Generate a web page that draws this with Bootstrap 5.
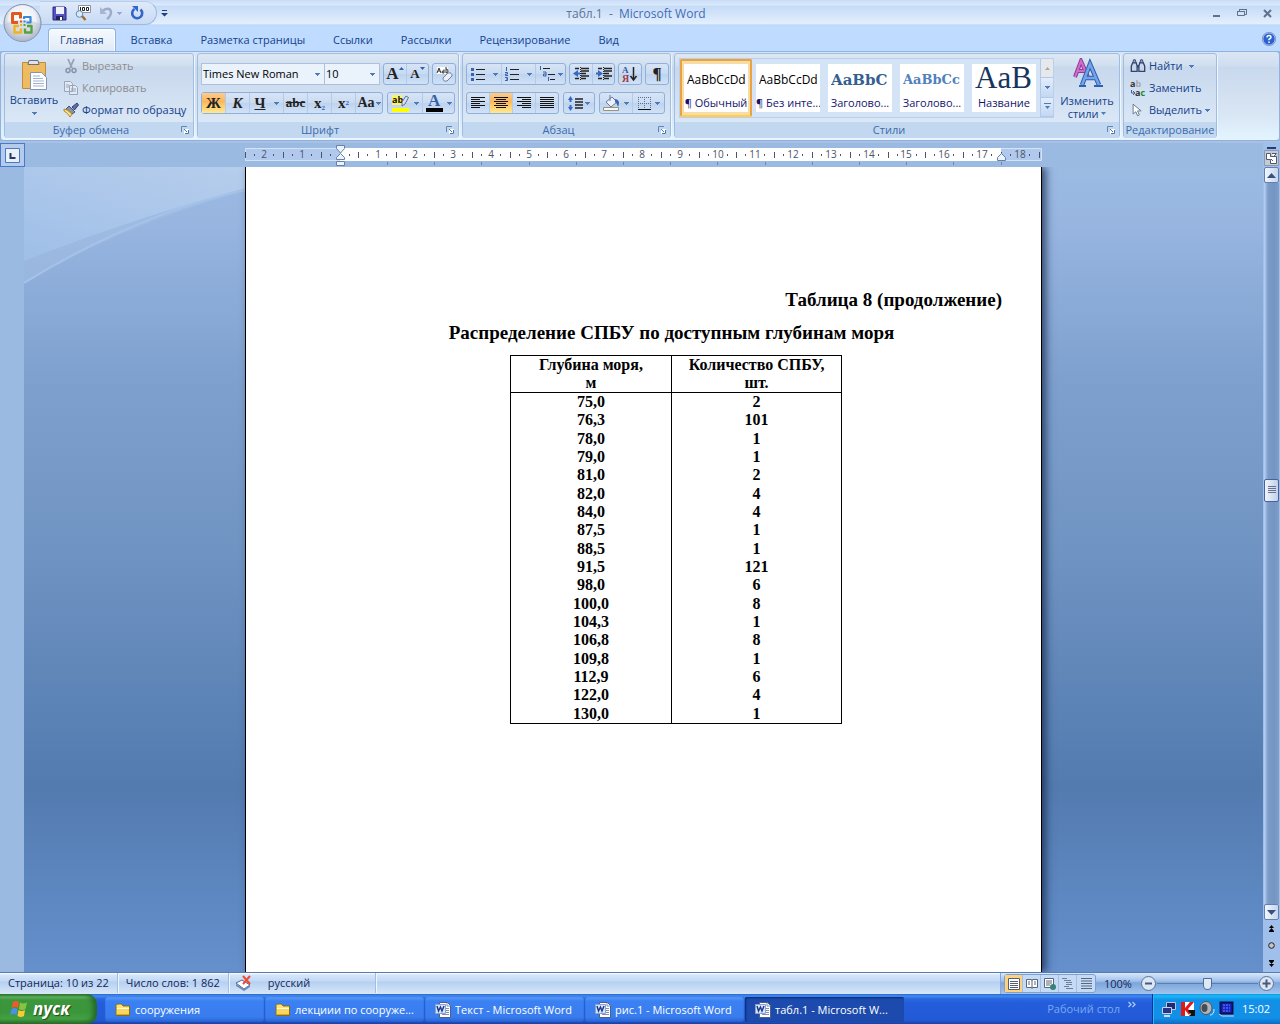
<!DOCTYPE html>
<html lang="ru">
<head>
<meta charset="utf-8">
<meta name="viewport" content="width=device-width, initial-scale=1">
<title>табл.1 - Microsoft Word</title>
<link href="https://cdn.jsdelivr.net/npm/bootstrap@5.3.0/dist/css/bootstrap.min.css" rel="stylesheet">
<style>
body{font-family:"Open Sans","Noto Sans",sans-serif;font-size:11px;line-height:16px;color:#15428b;background:#9bbae1}
svg{display:block;flex:none}
button{font:inherit;color:inherit;background:none;border:0;padding:0}
.app{min-height:100vh}
.side{flex:1 1 0}
/* title bar */
.titlebar{height:26px;background:linear-gradient(#c9dcf6 0,#dceafc 5px,#c6dbf7 6px,#e3effd 24px,#b2cff5 25px,#cde1fc 26px)}
.office{left:2px;top:2px;width:41px;height:41px;z-index:3}
.quick{height:24px;margin-left:40px;padding:0 12px 0 12px;border:1px solid #9db9e2;border-left:0;border-top-color:#b8cdec;border-radius:0 12px 12px 0;background:linear-gradient(#dfeafa,#c8daf4)}
.wintitle{font-size:12px;color:#5c7396;padding-top:2px}
.wintitle b{font-weight:400;color:#3f6db4}
/* tabs */
.tabs{height:25px;background:#bfdbff;padding-left:48px}
.tabs .nav-link{height:25px;padding:5px 13px 0;color:#15428b;font-size:11px;line-height:16px;border:1px solid transparent;border-bottom:0}
.tabs .nav-link.active{padding:3px 11px 0;margin:2px 1px 0 0;height:24px;border-color:#8db2e3;border-radius:4px 4px 0 0;background:linear-gradient(#f6fafe,#dfe9f5);box-shadow:inset 0 0 0 1px #fff}
/* ribbon */
.ribbon{height:90px;padding:1px 3px 2px;gap:3px;border:1px solid #8db2e3;border-bottom-color:#8fb1de;border-radius:4px;background:linear-gradient(#dbe6f4 0,#cfddef 14px,#c9d9ed 15px,#d8e5f4 60px,#e3f4ff 88px)}
.ribbon-shade{height:2px;background:#a7c0e4}
.rgroup{flex:none;border:1px solid #9ebde0;border-radius:3px;box-shadow:1px 1px 0 #eff6fd;background:linear-gradient(#dde8f5 0,#d0deef 12px,#c8d8ed 13px,#d9e7f6 68px)}
.rgroup>.body{height:68px}
.rgroup>.caption{height:16px;line-height:16px;background:#c1d8f0;color:#3e6aaa;position:relative;text-align:center}
.caption svg{position:absolute;right:4px;top:4px}
.g-clip{width:190px}.g-font{width:262px}.g-para{width:209px}.g-style{width:446px}.g-edit{width:94px}
.g-font .body,.g-para .body{padding:9px 3px 0;gap:7px}
.g-edit .body{padding-left:6px}
.tool-row{height:22px;gap:4px}
.tool-row.tight{gap:3px}
.bgroup{height:22px;border:1px solid #90b0dc;border-radius:3px;background:linear-gradient(#d7e4f5,#c9dbf2 49%,#bdd2ee 50%,#d0e2f7)}
.bgroup button{display:flex;align-items:center;justify-content:center;gap:4px;height:20px;width:23px;color:#222;font-family:"Liberation Serif",serif;font-size:15px;font-weight:700}
.bgroup button+button{border-left:1px solid #b3cae9}
.bgroup .w-22{width:22px}.bgroup .w-24{width:24px}.bgroup .w-34{width:34px}.bgroup .w-32{width:32px}
.bgroup .w-30{width:30px;gap:2px}.bgroup .w-27{width:27px;gap:1px;font-size:14px}
.bgroup .fs-lg{font-size:17px;gap:0}.bgroup .fs-sm{font-size:13px;gap:0}
.bgroup sub,.bgroup sup{font-size:7px;color:#2d5fb5}
.bgroup .on{background:linear-gradient(#fccb8d,#fbb45b 45%,#fdc566 55%,#fee993)}
.combo{height:22px;border:1px solid #abc1de;background:#eaf2fb;color:#000;appearance:none;padding:0 1px;font:inherit;line-height:20px;border-radius:0;
 background-image:linear-gradient(#4f7ab8,#4f7ab8),linear-gradient(#4f7ab8,#4f7ab8),linear-gradient(#4f7ab8,#4f7ab8);background-repeat:no-repeat;background-size:5px 1px,3px 1px,1px 1px;background-position:right 4px top 9px,right 5px top 10px,right 6px top 11px}
.combo.face{width:124px}.combo.size{width:55px;border-left:0}
.big{width:58px;flex:none;padding-top:4px}
.big.two{line-height:13px}
.stack{padding-top:1px}
.small-btn{display:flex;flex:none;align-items:center;height:22px;gap:3px;color:#15428b;white-space:nowrap}
.small-btn:disabled{color:#8d8d8d}
/* style gallery */
.gallery{margin:4px 0 0 4px;height:60px;border:1px solid #b9d0ed;background:#d4e4f6}
.gstyle{width:72px;height:58px;padding:5px 4px}
.gstyle .sheet{display:block;width:64px;height:48px;background:#fff;overflow:hidden;text-align:center;color:#15156e;white-space:nowrap}
.gstyle .sample{display:flex;align-items:center;height:31px;margin-left:3px;width:58px;overflow:hidden;color:#000;font-size:12px}
.gstyle .sheet>.name{display:block;font-size:11px;line-height:16px}
.gstyle.sel{height:58px;border:2px solid #eba23f;border-bottom-color:#ffcf4b;padding:3px 2px;background:#f8dca5;border-radius:2px}
.gstyle .h1s{font-family:"DejaVu Serif","Liberation Serif",serif;font-weight:700;color:#365f91;font-size:15px}
.gstyle .h2s{font-family:"DejaVu Serif","Liberation Serif",serif;font-weight:700;color:#4f81bd;font-size:13px}
.gstyle .ts{font-family:"Liberation Serif",serif;color:#17365d;font-size:31px;align-items:flex-start;line-height:28px}
.gscroll{width:13px;border-left:1px solid #b0c9ea}
.gscroll button{display:flex;align-items:center;justify-content:center;flex:1;border-bottom:1px solid #b0c9ea;background:linear-gradient(#e3edfb,#c3d8f3)}
.gscroll button:first-child{background:#e6e8eb}
/* rulers and document */
.rulerbar{height:24px;background:#9bbae1}
.tabsel{width:25px;height:24px;border:1px solid #4a79cb;background:#b4cbec;display:flex;align-items:center;justify-content:center}
.vstrip{width:24px;background:#9bbae1}
.desk{background:linear-gradient(#9cbbe3 0,#96b4df 65px,#7ea0ce 215px,#6f93c2 390px,#567eb2 590px,#537bb0 620px,#6590cc 805px);overflow:hidden}
.swoosh{left:0;top:0}
.paper{width:797px;border:solid #000;border-width:0 1px;background:#fff;box-shadow:4px 0 8px rgba(20,40,75,.75);color:#000;font-family:"Liberation Serif",serif;font-weight:700;padding:123px 39px 0 38px}
.cap-r{font-size:19px;line-height:20px;margin:0;text-align:right}
.cap-c{font-size:19px;line-height:22px;margin:12px 0 11px;text-align:center;padding-left:57px}
.depths{width:332px;margin-left:226px;border-collapse:collapse;font-size:16px;border:1px solid #000;text-align:center}
.depths th,.depths td{padding:0;border:0 solid #000;border-right-width:1px;line-height:18px}
.depths th{border-bottom-width:1px;vertical-align:top}
.depths .c1{width:161px}
.depths tbody tr:nth-child(3n) td{line-height:19px}
.vscroll{width:17px;background:#a0bfeb}
.sbtn{width:15px;height:16px;margin-left:1px;border:1px solid #6380b5;border-radius:2px;background:linear-gradient(90deg,#f2f7fd,#c5d5eb);display:flex;align-items:center;justify-content:center}
.strack{flex:1 1 0;width:15px;background:linear-gradient(90deg,#bad3f5 0,#7c9cc9 4px,#7495c2 10px,#7f9ec8)}
.sthumb{height:23px;border:1px solid #47639d;border-radius:2px;background:linear-gradient(90deg,#f0f4fa,#c1d1e9)}
.browse{height:52px}
/* status bar */
.status{height:22px;border-top:1px solid #567db1;background:linear-gradient(#fff 0,#d5e5f9 2px,#c2d9f5 8px,#b5d0f1 9px,#d8e7f8 21px);color:#15275a}
.status .cell{height:20px;line-height:20px;border-right:1px solid #a0bde2;padding:0 8px;box-shadow:1px 0 0 #f0f6fd}
.status .proof{width:147px;padding-left:6px}
.status .right{height:21px;width:280px;padding-left:3px;background:linear-gradient(#dae8fa 0,#9fc1ec 8px,#7da5d9 10px,#a3c5ee 21px);border-left:1px solid #86a7d7}
.views{height:19px;border:1px solid #7e9fd0;border-radius:3px;background:#c5daf5}
.views button{width:18px;height:17px;display:flex;align-items:center;justify-content:center;border-right:1px solid #a5bfe3}
.views .on{background:#fcd27f}
.zoom{width:101px;height:16px;appearance:none;background:linear-gradient(#5d7fae,#5d7fae) center/100% 1px no-repeat;margin:0}
.zoom::-webkit-slider-thumb{appearance:none;width:9px;height:12px;border:1px solid #506c97;border-radius:1px 1px 5px 5px;background:#dfe9f6}
/* taskbar */
.taskbar{height:30px;background:linear-gradient(#2b66d0 0,#3f8cf0 2px,#2c66e0 5px,#245ddb 9px,#225ad6 26px,#1941a5 30px);color:#fff}
.start{width:97px;height:30px;padding-left:10px;background:linear-gradient(#2f7c2d 0,#63b563 3px,#3c963c 6px,#3a963a 18px,#43a143 25px,#2a6e29 30px);border-radius:0 10px 10px 0;box-shadow:inset -4px 0 5px #24672b;font-size:17px;font-weight:700;font-style:italic;gap:4px;text-shadow:1px 1px 1px #234a1b;color:#fff}
.tasks{gap:1px}
.task{width:159px;height:25px;margin-top:1px;padding:0 8px 0 10px;gap:4px;border-radius:2px;background:linear-gradient(#5d9bfa,#3c81f3 4px,#387cee 20px,#2a62d3);box-shadow:inset 0 0 1px #173c9b;color:#fff;text-align:left}
.task.cur{background:#1c4bad;box-shadow:inset 1px 1px 2px #0a2a74}
.tray{width:128px;height:30px;padding-left:8px;border-left:1px solid #0a2f93;background:linear-gradient(#1494e0 0,#18b9f5 2px,#1290e8 6px,#1290e8 24px,#0b6ac4 30px);box-shadow:inset 1px 0 0 #18bbff;gap:3px}
.deskbar{color:#7aa8f2}
</style>
<script src="https://cdn.jsdelivr.net/npm/bootstrap@5.3.0/dist/js/bootstrap.bundle.min.js"></script>
</head>
<body>
<svg width="0" height="0" class="position-absolute" aria-hidden="true">
<defs>
<symbol id="dn" viewBox="0 0 5 3"><path d="M0 0h5v1h-1v1h-1v1h-1v-1h-1v-1h-1z" fill="#4f7ab8"/></symbol>
<symbol id="launch" viewBox="0 0 8 8"><path d="M.5 6V.5H6" fill="none" stroke="#6286b8"/><path d="M3 3h5v5H3z" fill="#fff"/><path d="M3 3l3 3M7.500 4v3.500H4" stroke="#4f75ac" fill="none"/></symbol>
<symbol id="folder" viewBox="0 0 16 16"><path d="M1 13.500V3.500l1.500-1.500h4L8 4h6.500v9.500z" fill="#ffe27a" stroke="#8c6a12"/><path d="M2 6.500h12" stroke="#fffbe0"/><path d="M2 7h12v6H2z" fill="#fbd65c"/><path d="M2 12.500h12" stroke="#d9a92e"/></symbol>
<symbol id="word" viewBox="0 0 16 16"><path d="M4.500.500h8l3 3v12h-11z" fill="#fff" stroke="#4d5f8b"/><path d="M12 1v3h3M7 12.500h7M11 6.500h3M11 8.500h3M11 10.500h3" stroke="#7c8fb8" fill="none"/><path d="M.5 2.500h10v9h-10z" fill="#dce6fa" stroke="#8ea2d0"/><path d="M2 4l1.500 5L5.500 5l1.500 4L9 4" fill="none" stroke="#1c3d91" stroke-width="1.500"/></symbol>
</defs></svg>

<div class="app d-flex flex-column position-relative">
<button class="office position-absolute" aria-label="Office"><svg width="41" height="41" viewBox="0 0 41 41">
<defs><radialGradient id="orb" cx=".5" cy=".4" r=".6"><stop offset="0" stop-color="#fff"/><stop offset=".6" stop-color="#eef1f6"/><stop offset="1" stop-color="#a3aec3"/></radialGradient></defs>
<circle cx="20.500" cy="21" r="18.500" fill="url(#orb)" stroke="#7f8fae"/><path d="M3 22q17-8 35 0a17 17 0 0 1-35 0z" fill="#b5bfd0" opacity=".45"/>
<g fill="none" stroke-linejoin="round"><path d="M16 20.500h-5.500v-9h8v5" stroke="#e2571c" stroke-width="3"/><path d="M22 17v-2h6.500v5.500h-4" stroke="#3a86d8" stroke-width="2.200"/><path d="M17 24h-4.500v6.500h6.500v-4" stroke="#f0b31c" stroke-width="2.400"/><path d="M25 24h4.500v6.500h-6.500v-4" stroke="#56a33c" stroke-width="2.400"/></g>
<path d="M18 18.500h2v2h-2z" fill="#e2571c"/><path d="M21.500 18.500h2v2h-2z" fill="#3a86d8"/><path d="M18 22h2v2h-2z" fill="#f0b31c"/><path d="M21.500 22h2v2h-2z" fill="#56a33c"/></svg></button>

<header class="titlebar d-flex align-items-center">
<div class="side d-flex align-items-center">
<div class="quick d-flex align-items-center gap-2">
<button aria-label="Сохранить"><svg width="15" height="15" viewBox="0 0 15 15"><path d="M1 1h12l1 1v12H1z" fill="#5652c5" stroke="#29277c"/><path d="M4 1h8v7H4z" fill="#eef1fb"/><path d="M4 10h7v4H4z" fill="#23235d"/><path d="M8 11h2v3H8z" fill="#fff"/></svg></button>
<button aria-label="Масштаб 100"><svg width="16" height="16" viewBox="0 0 16 16"><path d="M3.500.500h12v7h-12z" fill="#fff" stroke="#8a94a8"/><path d="M5.500 2v4M7.500 2.500h2v3h-2zM11.500 2.500h2v3h-2z" stroke="#222" fill="none"/><circle cx="4.500" cy="9" r="3.300" fill="#d3ecfb" stroke="#6b88ad"/><path d="M7 11l3.500 4" stroke="#a0703c" stroke-width="2.500"/></svg></button>
<button aria-label="Отменить" class="d-flex align-items-center gap-1"><svg width="14" height="14" viewBox="0 0 14 14"><path d="M3 5q8-5 9 1q0 4-4 7" fill="none" stroke="#9eabc9" stroke-width="2.500"/><path d="M1 1v7h7z" fill="#a9b5d1"/></svg><svg width="5" height="3" opacity=".5"><use href="#dn"/></svg></button>
<button aria-label="Повторить"><svg width="14" height="14" viewBox="0 0 14 14"><path d="M4.500 3a5 5 0 1 0 6 .5" fill="none" stroke="#3465c8" stroke-width="2.600"/><path d="M2 0h6v6z" fill="#3465c8"/></svg></button>
</div>
<button aria-label="Настройка панели" class="ms-1"><svg width="7" height="7" viewBox="0 0 7 7"><path d="M1 0h5v1H1zM0 3h7L3.500 6.500z" fill="#233e7a"/></svg></button>
</div>
<div class="wintitle">табл.1&nbsp; -&nbsp; <b>Microsoft Word</b></div>
<div class="side d-flex justify-content-end align-items-center gap-3 pe-2">
<button aria-label="Свернуть"><svg width="8" height="10"><path d="M0 7h7v2H0z" fill="#60718d"/></svg></button>
<button aria-label="Восстановить"><svg width="10" height="10" viewBox="0 0 10 10"><path d="M2.500 3V1.500h7v5H8M.5 3.500h7v4h-7z" fill="none" stroke="#60718d"/><path d="M2 1.500h8M0 3.500h8" stroke="#60718d"/></svg></button>
<button aria-label="Закрыть"><svg width="9" height="9" viewBox="0 0 9 9"><path d="M1 1l7 7M8 1L1 8" stroke="#60718d" stroke-width="2"/></svg></button>
</div>
</header>

<nav class="tabs d-flex justify-content-between align-items-center pe-1">
<ul class="nav flex-nowrap align-self-start">
<li class="nav-item"><a class="nav-link active" href="#">Главная</a></li>
<li class="nav-item"><a class="nav-link" href="#">Вставка</a></li>
<li class="nav-item"><a class="nav-link" href="#">Разметка страницы</a></li>
<li class="nav-item"><a class="nav-link" href="#">Ссылки</a></li>
<li class="nav-item"><a class="nav-link" href="#">Рассылки</a></li>
<li class="nav-item"><a class="nav-link" href="#">Рецензирование</a></li>
<li class="nav-item"><a class="nav-link" href="#">Вид</a></li>
</ul>
<button aria-label="Справка"><svg width="14" height="14" viewBox="0 0 14 14"><circle cx="7" cy="7" r="6.300" fill="#2b62d2" stroke="#e9f2ff"/><circle cx="7" cy="7" r="6.700" fill="none" stroke="#4667a8" stroke-width=".6"/><path d="M5 5.500q0-2 2-2t2 1.800q0 1-2 2v1M7 9.500v1.500" stroke="#fff" stroke-width="1.500" fill="none"/></svg></button>
</nav>

<div class="ribbon d-flex">
<section class="rgroup g-clip"><div class="body d-flex">
<button class="big d-flex flex-column align-items-center"><svg width="32" height="34" viewBox="0 0 32 34"><path d="M4.500 4.500h23v26h-23z" fill="#eebb61" stroke="#c08d3c"/><path d="M11 2.500h9l1 4H10z" fill="#dfe2e8" stroke="#687080"/><path d="M12.500 14.500h11l5 5v12h-16z" fill="#fff" stroke="#7f94b8" /><path d="M15 18h7M15 20.500h10M15 23h11M15 25.500h11M15 28h11" stroke="#9fb1cd"/></svg><span>Вставить</span><svg class="mt-1" width="5" height="3"><use href="#dn"/></svg></button>
<div class="stack d-flex flex-column">
<button class="small-btn" disabled><svg width="16" height="16" viewBox="0 0 16 16"><path d="M5 1l4 9M11 1L7 10" stroke="#98a2b3" stroke-width="1.800"/><circle cx="5" cy="12.500" r="2" fill="none" stroke="#8793a8" stroke-width="1.500"/><circle cx="11" cy="12.500" r="2" fill="none" stroke="#8793a8" stroke-width="1.500"/></svg>Вырезать</button>
<button class="small-btn" disabled><svg width="16" height="16" viewBox="0 0 16 16"><path d="M1.500 1.500h6l2 2v8h-8zM6.500 5.500h6l2 2v7h-8z" fill="#e3e9f2" stroke="#98a5bd"/><path d="M3 5h3M3 7h3M8 9h5M8 11h5" stroke="#98a5bd"/></svg>Копировать</button>
<button class="small-btn"><svg width="16" height="16" viewBox="0 0 16 16"><path d="M9 5l5-4 1.500 2-4 5z" fill="#5f6fa5" stroke="#33407a"/><path d="M6 4l6 6-3 2-6-5z" fill="#8791ab" stroke="#4d5468"/><path d="M1 7q3 0 8 5l-2 3q-2-4-6-6z" fill="#ffe17a" stroke="#b08a2c"/></svg>Формат по образцу</button>
</div></div><div class="caption pe-3">Буфер обмена<svg width="8" height="8"><use href="#launch"/></svg></div></section>

<section class="rgroup g-font"><div class="body d-flex flex-column">
<div class="tool-row tight d-flex">
<div class="d-flex"><select class="combo face" aria-label="Шрифт"><option>Times New Roman</option></select><select class="combo size" aria-label="Размер"><option>10</option></select></div>
<div class="bgroup d-flex"><button class="w-22 fs-lg" aria-label="Увеличить размер">A<svg width="5" height="14" viewBox="0 0 5 14"><path d="M0 3L2.500 0 5 3z" fill="#335fae"/></svg></button><button class="w-22 fs-sm" aria-label="Уменьшить размер">A<svg width="5" height="14" viewBox="0 0 5 14"><path d="M0 0L2.500 3 5 0z" fill="#335fae"/></svg></button></div>
<div class="bgroup d-flex"><button class="w-22" aria-label="Очистить формат"><svg width="17" height="17" viewBox="0 0 17 17"><path d="M1 1h11v7H1z" fill="#fff"/><path d="M1 7l2-5 2 5M2 5h2M8 3.500v3.500q-2 .5-2-1t2-1M10 1v6q2 0 2-2t-2-2" stroke="#333" fill="none"/><path d="M7 12l5-5q4-1 4 3l-5 5q-4 1-4-3z" fill="#edf1f7" stroke="#6e7f9f"/></svg></button></div>
</div>
<div class="tool-row d-flex">
<div class="bgroup d-flex"><button class="on">Ж</button><button class="w-24"><i>К</i></button><button class="w-34"><u>Ч</u><svg class="ms-1" width="5" height="3"><use href="#dn"/></svg></button><button class="w-24 fs-sm"><s>abc</s></button><button class="w-24"><span>x<sub>2</sub></span></button><button class="w-24"><span>x<sup>2</sup></span></button><button class="w-27">Aa<svg width="5" height="3"><use href="#dn"/></svg></button></div>
<div class="bgroup d-flex"><button class="w-34" aria-label="Цвет выделения"><svg width="18" height="18" viewBox="0 0 18 18"><path d="M0 1h10v10H0z" fill="#fbf45e"/><text x="0" y="9" font-family="Open Sans, sans-serif" font-size="9" fill="#111">ab</text><path d="M10 8l4-6 2.500 1.500L13 10l-3 2z" fill="#dbe3f0" stroke="#5e6f92"/><path d="M0 14h17v4H0z" fill="#ff0"/></svg><svg width="5" height="3"><use href="#dn"/></svg></button><button class="w-32" aria-label="Цвет текста"><svg width="17" height="18" viewBox="0 0 17 18"><text x="2" y="12" font-family="Liberation Serif, serif" font-size="17" font-weight="700" fill="#365fa6">A</text><path d="M0 14h17v4H0z" fill="#000"/></svg><svg width="5" height="3"><use href="#dn"/></svg></button></div>
</div></div><div class="caption pe-3">Шрифт<svg width="8" height="8"><use href="#launch"/></svg></div></section>

<section class="rgroup g-para"><div class="body d-flex flex-column">
<div class="tool-row tight d-flex">
<div class="bgroup d-flex"><button class="w-34" aria-label="Маркеры"><svg width="14" height="14" viewBox="0 0 14 14"><path d="M5 2.500h9M5 7.500h9M5 12.500h9" stroke="#222"/><path d="M0 1h3v3H0zM0 6h3v3H0zM0 11h3v3H0z" fill="#3b61ac"/></svg><svg class="ms-1" width="5" height="3"><use href="#dn"/></svg></button><button class="w-34" aria-label="Нумерация"><svg width="14" height="14" viewBox="0 0 14 14"><path d="M5 2.500h9M5 7.500h9M5 12.500h9" stroke="#222"/><path d="M1.500 0v4M0 5.500h2.500v1.500H.5v1.500H3M0 10.500h2.500v3H0M1 12h2" fill="none" stroke="#3b61ac"/></svg><svg class="ms-1" width="5" height="3"><use href="#dn"/></svg></button><button class="w-30" aria-label="Многоуровневый список"><svg width="17" height="16" viewBox="0 0 17 16"><path d="M4 2.500h7M9 8.500h7M11 13.500h5" stroke="#222"/><path d="M1.500 0v4M4 6h3v4H4.500V8H7M9.500 11v4" fill="none" stroke="#3b61ac"/></svg><svg width="5" height="3"><use href="#dn"/></svg></button></div>
<div class="bgroup d-flex"><button class="w-22" aria-label="Уменьшить отступ"><svg width="16" height="14" viewBox="0 0 16 14"><path d="M2 1.500h4M2 11.500h4M8 1.500h8M8 4h8M8 6.500h5M8 9h8M8 11.500h5" stroke="#222" stroke-width="1.300"/><path d="M7.500 0v14" stroke="#222" stroke-dasharray="1 1"/><path d="M5 3v7L0 6.500zM5 5.500h2v2H5z" fill="#3768c3"/></svg></button><button class="w-22" aria-label="Увеличить отступ"><svg width="16" height="14" viewBox="0 0 16 14"><path d="M2 1.500h4M2 11.500h4M8 1.500h8M8 4h8M8 6.500h5M8 9h8M8 11.500h5" stroke="#222" stroke-width="1.300"/><path d="M7.500 0v14" stroke="#222" stroke-dasharray="1 1"/><path d="M2 3v7l5-3.500zM0 5.500h2v2H0z" fill="#3768c3"/></svg></button></div>
<div class="bgroup d-flex"><button class="w-22" aria-label="Сортировка"><svg width="16" height="17" viewBox="0 0 16 17"><text x="0" y="7" font-family="Liberation Serif, serif" font-size="9" font-weight="700" fill="#31599f">А</text><text x="0" y="16" font-family="Liberation Serif, serif" font-size="10" font-weight="700" fill="#a6383d">Я</text><path d="M11.500 1v12M8.500 10l3 4 3-4" stroke="#222" stroke-width="1.500" fill="none"/></svg></button></div>
<div class="bgroup d-flex"><button class="w-22 fs-lg">¶</button></div>
</div>
<div class="tool-row d-flex">
<div class="bgroup d-flex"><button class="w-22" aria-label="По левому краю"><svg width="14" height="12"><path d="M0 .5h14M0 2.500h9M0 4.500h14M0 6.500h9M0 8.500h14M0 10.500h9" stroke="#111"/></svg></button><button class="on" aria-label="По центру"><svg width="14" height="12"><path d="M0 .5h14M2 2.500h10M0 4.500h14M2 6.500h10M0 8.500h14M2 10.500h10" stroke="#111"/></svg></button><button aria-label="По правому краю"><svg width="14" height="12"><path d="M0 .5h14M5 2.500h9M0 4.500h14M5 6.500h9M0 8.500h14M5 10.500h9" stroke="#111"/></svg></button><button aria-label="По ширине"><svg width="14" height="12"><path d="M0 .5h14M0 2.500h14M0 4.500h14M0 6.500h14M0 8.500h14M0 10.500h14" stroke="#111"/></svg></button></div>
<div class="bgroup d-flex"><button class="w-30" aria-label="Междустрочный интервал"><svg width="15" height="15" viewBox="0 0 15 15"><path d="M0 4l2.500-4L5 4H3.500v2h-2V4zM0 11l2.500 4L5 11H3.500V9h-2v2z" fill="#3768c3"/><path d="M7 3h8M7 6h8M7 9h8M7 12h8" stroke="#222" stroke-width="1.300"/></svg><svg width="5" height="3"><use href="#dn"/></svg></button></div>
<div class="bgroup d-flex"><button class="w-32" aria-label="Заливка"><svg width="17" height="16" viewBox="0 0 17 16"><path d="M3 7l6-5 5 5-6 5z" fill="#eef2f8" stroke="#687a9c"/><path d="M7 0v6" stroke="#687a9c"/><path d="M12 4q6 1 3 8-1-4-3-5z" fill="#3865b5"/><path d="M.5 12.500h15v3H.5z" fill="#f6f8f3" stroke="#99937a"/></svg><svg width="5" height="3"><use href="#dn"/></svg></button><button class="w-32" aria-label="Границы"><svg width="13" height="13" viewBox="0 0 13 13"><path d="M.5 0v12M6.500 0v12M12.500 0v12M0 .5h13M0 6.500h13" stroke="#5b6f93" stroke-dasharray="1 1"/><path d="M0 12.500h13" stroke="#111"/></svg><svg width="5" height="3"><use href="#dn"/></svg></button></div>
</div></div><div class="caption pe-3">Абзац<svg width="8" height="8"><use href="#launch"/></svg></div></section>

<section class="rgroup g-style"><div class="body d-flex">
<div class="gallery d-flex">
<button class="gstyle sel"><span class="sheet"><span class="sample">AaBbCcDd</span><span class="name">¶ Обычный</span></span></button>
<button class="gstyle"><span class="sheet"><span class="sample">AaBbCcDd</span><span class="name">¶ Без инте...</span></span></button>
<button class="gstyle"><span class="sheet"><span class="sample h1s">AaBbC</span><span class="name">Заголово...</span></span></button>
<button class="gstyle"><span class="sheet"><span class="sample h2s">AaBbCc</span><span class="name">Заголово...</span></span></button>
<button class="gstyle"><span class="sheet"><span class="sample ts">AaB</span><span class="name">Название</span></span></button>
<div class="gscroll d-flex flex-column"><button aria-label="Вверх"><svg width="5" height="3" viewBox="0 0 5 3"><path d="M0 3h5L2.500 0z" fill="#a8a8a8"/></svg></button><button aria-label="Вниз"><svg width="5" height="3"><use href="#dn"/></svg></button><button aria-label="Все стили"><svg width="7" height="7" viewBox="0 0 7 7"><path d="M0 0h7v1H0zM1 3h5L3.500 6z" fill="#4f7ab8"/></svg></button></div>
</div>
<button class="big two d-flex flex-column align-items-center ms-1"><svg width="31" height="32" viewBox="0 0 31 32"><g fill="none"><path d="M3 19L9 3l7 16M5 13h9" stroke="#8a3d98" stroke-width="4"/><path d="M3 19L9 3l7 16M5 13h9" stroke="#d66bca" stroke-width="2"/><path d="M10 27l8-21 9 21M13 20h11" stroke="#2f5fae" stroke-width="4.500"/><path d="M10 27l8-21 9 21M13 20h11" stroke="#73a4ea" stroke-width="2.500"/></g><path d="M7 28h7M22 28h9" stroke="#2f5fae" stroke-width="2"/></svg><span class="mt-1">Изменить</span><span>стили <svg class="d-inline-block" width="5" height="6" viewBox="0 0 5 6"><path d="M0 0h5L2.500 3z" fill="#4f7ab8"/></svg></span></button>
</div><div class="caption pe-3">Стили<svg width="8" height="8"><use href="#launch"/></svg></div></section>

<section class="rgroup g-edit"><div class="body stack">
<button class="small-btn"><svg width="16" height="16" viewBox="0 0 18 16"><path d="M3 5l1-4h2l1 4M11 5l1-4h2l1 4" fill="#8fa2c7" stroke="#31456f"/><path d="M1.500 8L3 4.500h4l1 3.500v6h-6.500zM10 8l1-3.500h4L16.500 8v6H10z" fill="#c9d5ea" stroke="#31456f" stroke-width="1.500"/><path d="M8 7h2v3H8z" fill="#31456f"/></svg>Найти<svg class="ms-1" width="5" height="3"><use href="#dn"/></svg></button>
<button class="small-btn"><svg width="16" height="17" viewBox="0 0 16 17"><text x="0" y="7" font-family="Open Sans, sans-serif" font-size="9" font-weight="700" fill="#333">a<tspan fill="#a5a9b0">b</tspan></text><text x="5" y="16" font-family="Open Sans, sans-serif" font-size="9" font-weight="700" fill="#333">a<tspan fill="#1d8a2a">c</tspan></text><path d="M1.500 10v3H4M3 11l2 2-2 2" fill="none" stroke="#3d5fa3"/></svg>Заменить</button>
<button class="small-btn"><svg width="16" height="16" viewBox="0 0 18 16"><path d="M3.500 1.500v11l3-2.500 2 4.500 2-1-2-4.500h4z" fill="#fff" stroke="#5d6b85"/></svg>Выделить<svg width="5" height="3"><use href="#dn"/></svg></button>
</div><div class="caption text-nowrap">Редактирование</div></section>
</div>
<div class="ribbon-shade"></div>

<div class="rulerbar d-flex">
<button class="tabsel" aria-label="Позиция табуляции"><svg width="15" height="15" viewBox="0 0 15 15"><path d="M.5.500h14v14H.5z" fill="#e8f0fa" stroke="#4a79cb"/><path d="M5.500 5v5h5" fill="none" stroke="#243a63" stroke-width="2"/></svg></button>
<div class="flex-grow-1 d-flex justify-content-center">
<svg width="798" height="24" viewBox="0 0 798 24" font-family="Open Sans, sans-serif" font-size="10" fill="#4a5568" text-anchor="middle">
<path d="M.5 5.500h796v12H.5z" fill="#b0c9ec" stroke="#d3e2f6"/><path d="M95 5h661v13H95z" fill="#fff"/>
<g shape-rendering="crispEdges" stroke="#4a5568" fill="none"><path d="M0 12h796" stroke-width="6" stroke-dasharray="1 36.800"/><path d="M9 12h787" stroke-width="2" stroke-dasharray="1 36.800"/><path d="M28 12h768" stroke-width="2" stroke-dasharray="1 36.800"/><path d="M142 20.500h620" stroke="#7b8798" stroke-width="3" stroke-dasharray="1 46.200"/></g>
<text x="19" y="15">2</text><text x="57" y="15">1</text><text x="133" y="15">1</text><text x="170" y="15">2</text><text x="208" y="15">3</text><text x="246" y="15">4</text><text x="284" y="15">5</text><text x="321" y="15">6</text><text x="359" y="15">7</text><text x="397" y="15">8</text><text x="435" y="15">9</text><text x="473" y="15">10</text><text x="510" y="15">11</text><text x="548" y="15">12</text><text x="586" y="15">13</text><text x="624" y="15">14</text><text x="661" y="15">15</text><text x="699" y="15">16</text><text x="737" y="15">17</text><text x="775" y="15">18</text>
<path d="M91.500 2.500h8v3l-4 4.500-4-4.500zM91.500 16.500v-2l4-4 4 4v2zM91.500 18.500h8v4h-8zM752.500 17.500v-3l4-4 4 4v3z" fill="#edf3fb" stroke="#6481ae"/>
</svg></div>
<div class="vscroll d-flex flex-column align-items-center justify-content-end"><svg width="9" height="3"><path d="M0 0h9v2H0z" fill="#253d70"/></svg>
<button aria-label="Линейка"><svg width="15" height="17" viewBox="0 0 15 17"><path d="M.5.500h14v15H.5z" fill="#c3cbd8" stroke="#8d99ae"/><path d="M2.500 3.500h4v3h6v7h-6v-4h-4zM8 3.500h4.500L9 7M7 9l2 2" fill="#fff" stroke="#4d596e"/></svg></button></div>
</div>

<main class="d-flex flex-grow-1">
<div class="vstrip"></div>
<div class="desk flex-grow-1 d-flex justify-content-center position-relative">
<svg class="swoosh position-absolute" width="300" height="120" viewBox="0 0 300 120"><defs><linearGradient id="sw" x1="0" y1="1" x2="1" y2="0"><stop offset="0" stop-color="#9fbfe8"/><stop offset="1" stop-color="#bad0ed"/></linearGradient></defs><path d="M0 0h300v5q-170 35-300 111z" fill="#a3c0e4" opacity=".5"/><path d="M0 116Q110 48 221 23" stroke="#a5c2e9" stroke-width="2" fill="none"/><path d="M0 0h300v2Q150 35 0 94z" fill="url(#sw)"/></svg>
<article class="paper position-relative">
<p class="cap-r">Таблица 8 (продолжение)</p>
<h1 class="cap-c fw-bold">Распределение СПБУ по доступным глубинам моря</h1>
<table class="depths">
<thead><tr><th class="c1">Глубина моря,<br>м</th><th>Количество СПБУ,<br>шт.</th></tr></thead>
<tbody>
<tr><td>75,0</td><td>2</td></tr><tr><td>76,3</td><td>101</td></tr><tr><td>78,0</td><td>1</td></tr><tr><td>79,0</td><td>1</td></tr><tr><td>81,0</td><td>2</td></tr><tr><td>82,0</td><td>4</td></tr><tr><td>84,0</td><td>4</td></tr><tr><td>87,5</td><td>1</td></tr><tr><td>88,5</td><td>1</td></tr><tr><td>91,5</td><td>121</td></tr><tr><td>98,0</td><td>6</td></tr><tr><td>100,0</td><td>8</td></tr><tr><td>104,3</td><td>1</td></tr><tr><td>106,8</td><td>8</td></tr><tr><td>109,8</td><td>1</td></tr><tr><td>112,9</td><td>6</td></tr><tr><td>122,0</td><td>4</td></tr><tr><td>130,0</td><td>1</td></tr>
</tbody></table>
</article>
</div>
<div class="vscroll d-flex flex-column">
<button class="sbtn" aria-label="Вверх"><svg width="9" height="5"><path d="M0 5h9L4.500 0z" fill="#36517f"/></svg></button>
<div class="strack mx-auto d-flex flex-column"><div style="flex:296 1 0"></div><button class="sthumb d-flex align-items-center justify-content-center" aria-label="Ползунок"><svg width="8" height="8"><path d="M0 .5h8M0 2.500h8M0 4.500h8M0 6.500h8" stroke="#66758d"/></svg></button><div style="flex:403 1 0"></div></div>
<button class="sbtn" aria-label="Вниз"><svg width="9" height="5"><path d="M0 0h9L4.500 5z" fill="#36517f"/></svg></button>
<div class="browse d-flex flex-column align-items-center justify-content-around">
<button aria-label="Предыдущая страница"><svg width="5" height="7"><path d="M0 3L2.500 0 5 3zM0 6L2.500 3 5 6zM0 6h5v1H0z" fill="#000"/></svg></button>
<button aria-label="Выбор объекта"><svg width="7" height="7"><circle cx="3.500" cy="3.500" r="2.800" fill="#c5c5c5" stroke="#222"/></svg></button>
<button aria-label="Следующая страница"><svg width="5" height="7"><path d="M0 0h5v1H0zM0 1l2.500 3L5 1zM0 4l2.500 3L5 4z" fill="#000"/></svg></button></div>
</div>
</main>

<footer class="status d-flex align-items-start">
<div class="cell">Страница: 10 из 22</div><div class="cell">Число слов: 1 862</div>
<div class="cell proof d-flex align-items-center gap-3"><svg width="17" height="16" viewBox="0 0 17 16"><path d="M1 8l6-3 8 5-6 4z" fill="#fff" stroke="#51688f"/><path d="M1 9v2l8 5 6-4v-2l-6 4z" fill="#6d88ba"/><path d="M8 1l7 8M15 1L8 9" stroke="#ed4b37" stroke-width="2"/></svg>русский</div>
<div class="right d-flex align-items-center ms-auto">
<div class="views d-flex"><button class="on" aria-label="Разметка страницы"><svg width="12" height="12"><path d="M.5.500h11v11H.5z" fill="#fff" stroke="#555f74"/><path d="M2 3.500h8M2 5.500h8M2 7.500h8M2 9.500h8" stroke="#555f74"/></svg></button><button aria-label="Режим чтения"><svg width="12" height="11"><path d="M.5 1.500h5l.5 1 .5-1h5v8h-5l-.5 1-.5-1h-5z" fill="#fff" stroke="#59657c"/><path d="M2 4h2M2 6h2M8 4h2M8 6h2M6 2v8" stroke="#59657c"/></svg></button><button aria-label="Веб-документ"><svg width="12" height="12"><path d="M.5.500h9v9h-9z" fill="#fff" stroke="#59657c"/><path d="M2 3h6M2 5h6M2 7h4" stroke="#59657c"/><circle cx="9" cy="9" r="3" fill="#378276"/></svg></button><button aria-label="Структура"><svg width="11" height="11"><path d="M0 .5h5M2 2.500h7M4 4.500h6M4 6.500h6M2 8.500h5M4 10.500h7" stroke="#6f7e98"/></svg></button><button class="border-0" aria-label="Черновик"><svg width="11" height="11"><path d="M0 .5h11M0 3h11M0 5.500h11M0 8h11M0 10.500h11" stroke="#59657c"/></svg></button></div>
<span class="px-2">100%</span>
<button aria-label="Уменьшить"><svg width="17" height="17"><circle cx="8.500" cy="8.500" r="7" fill="#dce7f5" stroke="#58719b"/><path d="M5 8.500h7" stroke="#46597a" stroke-width="2"/></svg></button>
<input class="zoom" type="range" min="10" max="190" value="100" aria-label="Масштаб">
<button aria-label="Увеличить"><svg width="17" height="17"><circle cx="8.500" cy="8.500" r="7" fill="#dce7f5" stroke="#58719b"/><path d="M4.500 8.500h8M8.500 4.500v8" stroke="#46597a" stroke-width="2"/></svg></button>
</div></footer>

<footer class="taskbar d-flex align-items-center">
<button class="start d-flex align-items-center me-2"><svg width="19" height="18" viewBox="0 0 19 18"><path d="M3 2q3-2 6 0L8 8Q5 6 1.500 8z" fill="#f05a2a"/><path d="M10 2.500q3 2 7 0L15.500 9q-3 2-6.500 0z" fill="#8ac43f"/><path d="M1.500 9q3-2 6 0l-1 6q-3-2-6.500 0z" fill="#4a8fe8"/><path d="M8.500 10q3 2 6.500 0l-1 6q-3 2-6.500 0z" fill="#fbc935"/></svg>пуск</button>
<div class="tasks d-flex">
<button class="task d-flex align-items-center"><svg width="16" height="16"><use href="#folder"/></svg><span class="text-truncate">сооружения</span></button>
<button class="task d-flex align-items-center"><svg width="16" height="16"><use href="#folder"/></svg><span class="text-truncate">лекциии по сооруже...</span></button>
<button class="task d-flex align-items-center"><svg width="16" height="16"><use href="#word"/></svg><span class="text-truncate">Текст - Microsoft Word</span></button>
<button class="task d-flex align-items-center"><svg width="16" height="16"><use href="#word"/></svg><span class="text-truncate">рис.1 - Microsoft Word</span></button>
<button class="task cur d-flex align-items-center"><svg width="16" height="16"><use href="#word"/></svg><span class="text-truncate">табл.1 - Microsoft W...</span></button>
</div>
<div class="deskbar ms-auto me-3 d-flex gap-2"><span>Рабочий стол</span><svg width="8" height="7"><path d="M.5 1l2.500 2.500L.5 6M4.500 1L7 3.500 4.500 6" fill="none" stroke="#a7c8fb" stroke-width="1.300"/></svg></div>
<div class="tray d-flex align-items-center">
<svg width="16" height="16" viewBox="0 0 16 16"><path d="M5.500 1.500h9v7h-9z" fill="#1c2a78" stroke="#b9c5df"/><path d="M1.500 6.500h9v6h-9z" fill="#26358c" stroke="#c8d2e6"/><path d="M3 14h6v2H3z" fill="#d5dbe6"/></svg>
<svg width="16" height="16" viewBox="0 0 16 16"><path d="M1 1h13v14H1z" fill="#fff"/><path d="M1 1h4v6l5-6h4L8 8l3 3-2 3-4-5v6H1z" fill="#e01a1a"/><path d="M9 9h6v6h-6l2-2-3-3z" fill="#111"/></svg>
<svg width="16" height="16" viewBox="0 0 16 16"><ellipse cx="7" cy="7" rx="6" ry="6.500" fill="#aeb4ba" stroke="#4d555e"/><ellipse cx="5.500" cy="7" rx="3" ry="4" fill="#454b52"/><path d="M11 14q4 0 4-6" stroke="#dfe7f2" fill="none"/></svg>
<svg width="17" height="16" viewBox="0 0 17 16"><path d="M2.500 1.500h12v11h-12z" fill="#1c25c5" stroke="#0a0f55" stroke-width="2"/><path d="M5 4h7M5 7h7M5 10h7" stroke="#5a8bff" stroke-dasharray="2 1"/><path d="M1 13l3 2h12" stroke="#cfd6ea" fill="none"/></svg>
<span class="ms-1">15:02</span></div>
</footer>
</div>
</body>
</html>
